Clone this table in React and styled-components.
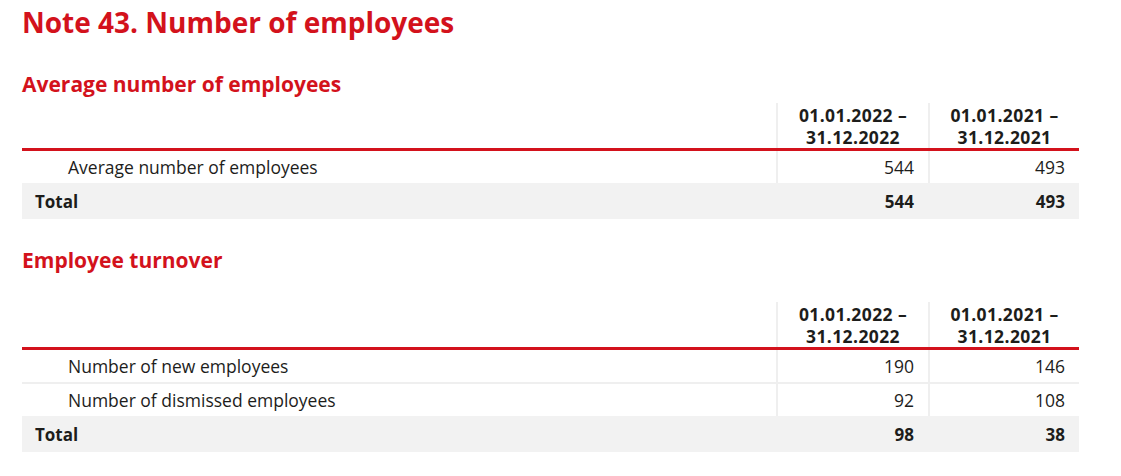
import React from 'react';
import styled, { createGlobalStyle } from 'styled-components';

const RED = '#d3121c';

const Global = createGlobalStyle`
  html, body { margin: 0; padding: 0; background: #fff; }
  body { font-family: "Open Sans", "Liberation Sans", sans-serif; color: #1d1d1b; }
`;

const Page = styled.div`
  padding: 4px 0 0 22px;
  width: 1057px;
`;

const Title = styled.h1`
  margin: 0;
  font-size: 28px;
  line-height: 36px;
  font-weight: 700;
  color: ${RED};
`;

const Subtitle = styled.h2`
  margin: ${p => p.$top}px 0 0;
  font-size: 21px;
  line-height: 28px;
  font-weight: 700;
  color: ${RED};
`;

const Table = styled.div`
  margin-top: ${p => p.$top}px;
  display: flex;
  flex-direction: column;
`;

const Row = styled.div`
  display: grid;
  grid-template-columns: 754px 152px 151px;
  background: ${p => (p.$total ? '#f2f2f2' : '#fff')};
  border-bottom: ${p => (p.$head ? `3px solid ${RED}` : p.$line ? '2px solid #efefef' : 'none')};
`;

const Cell = styled.div`
  height: ${p => p.$h}px;
  display: flex;
  align-items: center;
  justify-content: ${p => (p.$num ? 'flex-end' : 'flex-start')};
  padding: 0 14px 0 ${p => p.$indent || 0}px;
  font-size: ${p => (p.$bold ? 17 : 17.5)}px;
  font-weight: ${p => (p.$bold ? 700 : 400)};
  border-left: ${p => (p.$sep ? '2px solid #efefef' : 'none')};
`;

const HeadCell = styled.div`
  height: 45px;
  border-left: 2px solid #efefef;
  display: flex;
  flex-direction: column;
  align-items: center;
  justify-content: center;
  font-size: 17.5px;
  letter-spacing: 0.4px;
  font-weight: 700;
  line-height: 22px;
  text-align: center;
`;

const periods = [
  ['01.01.2022 –', '31.12.2022'],
  ['01.01.2021 –', '31.12.2021'],
];

function DataTable({ top, rows, total }) {
  return (
    <Table $top={top}>
      <Row $head>
        <div />
        {periods.map(p => (
          <HeadCell key={p[0]}>
            <span>{p[0]}</span>
            <span>{p[1]}</span>
          </HeadCell>
        ))}
      </Row>
      {rows.map((r, i) => (
        <Row key={r[0]} $line={i < rows.length - 1}>
          <Cell $h={32} $indent={46}>{r[0]}</Cell>
          <Cell $h={32} $num $sep>{r[1]}</Cell>
          <Cell $h={32} $num $sep>{r[2]}</Cell>
        </Row>
      ))}
      <Row $total>
        <Cell $h={36} $indent={13} $bold>Total</Cell>
        <Cell $h={36} $num $bold>{total[0]}</Cell>
        <Cell $h={36} $num $bold>{total[1]}</Cell>
      </Row>
    </Table>
  );
}

export default function App() {
  return (
    <>
      <Global />
      <Page>
        <Title>Note 43. Number of employees</Title>
        <Subtitle $top={30}>Average number of employees</Subtitle>
        <DataTable
          top={5}
          rows={[['Average number of employees', '544', '493']]}
          total={['544', '493']}
        />
        <Subtitle $top={27}>Employee turnover</Subtitle>
        <DataTable
          top={28}
          rows={[
            ['Number of new employees', '190', '146'],
            ['Number of dismissed employees', '92', '108'],
          ]}
          total={['98', '38']}
        />
      </Page>
    </>
  );
}
